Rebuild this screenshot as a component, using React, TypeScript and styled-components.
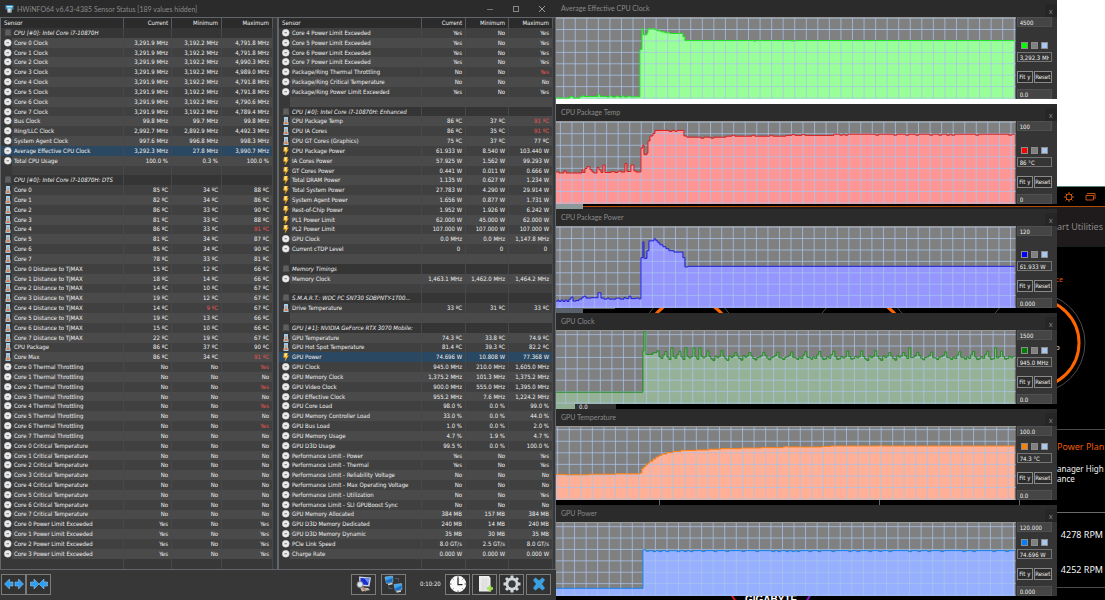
import React from "react";
import styled, { createGlobalStyle } from "styled-components";

const UI = `"DejaVu Sans Condensed", "Noto Sans", sans-serif`;
const TITLE = `Lato, "Noto Sans", sans-serif`;

const Global = createGlobalStyle`
  * { box-sizing: border-box; }
  html, body { margin: 0; height: 100%; background: #fff; overflow: hidden; }
  body { font-family: ${UI}; font-size: 6px; line-height: 8px; color: #f0f0f0; }
  button, input { font: inherit; color: inherit; margin: 0; padding: 0; border-radius: 0; }
`;

const Screen = styled.div`
  display: grid;
  grid-template-columns: minmax(0, 556fr) minmax(0, 549fr);
  grid-template-rows: minmax(0, 1fr);
  height: 100vh;
  overflow: hidden;
`;

/* ---------- sensor window ---------- */

const SensorWindow = styled.section`
  display: flex;
  flex-direction: column;
  min-height: 0;
  background: #373737;
`;

const TitleBar = styled.header`
  display: flex;
  align-items: center;
  flex: none;
  height: 17px;
  padding: 0 5px 0 5px;
  gap: 3px;
  background: #2b2b2b;
  color: #8a8a8a;
  font-family: ${TITLE};
  font-size: 7px;
`;

const TitleText = styled.h1`
  flex: 1;
  margin: 0;
  font: inherit;
`;

const CaptionButton = styled.button`
  display: flex;
  align-items: center;
  justify-content: center;
  width: 18px;
  height: 14px;
  margin-left: 5px;
  border: 0;
  background: none;
`;

const Panes = styled.div`
  flex: 1;
  min-height: 0;
  display: grid;
  grid-template: minmax(0, 1fr) / 1fr 1fr;
`;

const Pane = styled.div<{ $end: number }>`
  min-width: 0;
  min-height: 0;
  padding-right: ${(p) => p.$end}px;
  border: 1px solid #62656a;
`;

const Table = styled.table`
  width: 100%;
  height: 100%;
  table-layout: fixed;
  border-collapse: separate;
  border-spacing: 0;
`;

const Head = styled.th<{ $left?: boolean }>`
  padding: 0 3px;
  height: 10px;
  line-height: 8px;
  font-weight: 400;
  text-align: ${(p) => (p.$left ? "left" : "right")};
  background: #2b2b2b;
  border-right: 1px solid #55585c;
`;

const Row = styled.tr<{ $kind: "odd" | "even" | "group" | "selected" | "filler" }>`
  background: ${(p) =>
    ({ odd: "#4a4a4a", even: "#404040", group: "#353535", selected: "#2b4862", filler: "#383838" })[p.$kind]};
  font-style: ${(p) => (p.$kind === "group" ? "italic" : "normal")};
`;

const Cell = styled.td<{ $hot?: boolean }>`
  height: 8px;
  padding: 0 3px 0 0;
  line-height: 8px;
  text-align: right;
  white-space: nowrap;
  color: ${(p) => (p.$hot ? "#e85555" : "inherit")};
  border-right: 1px solid #434950;
`;

const NameCell = styled(Cell)`
  text-align: left;
  padding: 0 0 0 2px;
  overflow: hidden;
`;

const IconCell = styled.td<{ $plain: boolean }>`
  padding: 0 0 0 3px;
  height: 8px;
  line-height: 0;
  background: ${(p) => (p.$plain ? "#383838" : "transparent")};

  svg {
    display: block;
  }
`;

const Toolbar = styled.footer`
  flex: none;
  display: flex;
  align-items: center;
  height: 30px;
  gap: 2px;
  padding: 0 5px 2px 1px;
`;

const ColumnButtons = styled.div`
  display: flex;
  flex: 1;
`;

const ToolButton = styled.button<{ $gap?: number }>`
  display: flex;
  align-items: center;
  justify-content: center;
  width: 25px;
  height: 21px;
  margin-right: ${(p) => p.$gap ?? 0}px;
  border: 1px solid #7b7b7b;
  background: #333;
`;

const Elapsed = styled.time`
  width: 35px;
  padding-left: 12px;
`;

type IconKind = "c" | "t" | "p" | "g";

function RowIcon({ kind }: { kind: IconKind }) {
  if (kind === "c")
    return (
      <svg width="8" height="8" viewBox="0 0 16 16">
        <circle cx="7.500" cy="7.500" r="7" fill="#ececec" stroke="#c4c4c4" />
        <path d="M5 7.500h5" stroke="#777" strokeWidth="2" fill="none" />
      </svg>
    );
  if (kind === "t")
    return (
      <svg width="8" height="8" viewBox="0 0 16 16">
        <path d="M4 0h8v9l1 2v5H3v-5l1-2z" fill="#9fcbe6" />
        <path d="M7 4h2v6l2 1v3H5v-3l2-1z" fill="#ea7a3a" />
      </svg>
    );
  if (kind === "p")
    return (
      <svg width="8" height="8" viewBox="0 0 16 16">
        <path d="M4 0h8l-2 5h3L6 16l1-7H3z" fill="#ffc53d" stroke="#c98412" strokeWidth=".8" />
        <path d="M6 1h4L7.500 7H6z" fill="#fff0b0" />
      </svg>
    );
  return (
    <svg width="8" height="8" viewBox="0 0 16 16">
      <path d="M3 1h10l1 12H2z" fill="#626262" />
      <path d="M1 12h14v2H1z" fill="#4d4d4d" />
      <path d="M4 3v8M8 3v8M12 3v8" stroke="#555" />
    </svg>
  );
}

type Sensor = { icon: IconKind; name: string; v?: string[]; hot?: number[]; sel?: boolean } | null;

const s = (icon: IconKind, name: string, a: string, b: string, c: string, hot: number[] = [], sel = false): Sensor => ({
  icon,
  name,
  v: [a, b, c],
  hot,
  sel,
});
const g = (name: string): Sensor => ({ icon: "g", name });
const C = (n: number) => `${n} ºC`;
const range = [0, 1, 2, 3, 4, 5, 6, 7];

const coreMax = ["4,791.8", "4,791.8", "4,990.3", "4,989.0", "4,791.8", "4,791.8", "4,790.6", "4,789.4"];
const coreTemp = [
  [85, 34, 88],
  [82, 34, 86],
  [86, 33, 90],
  [81, 33, 88],
  [86, 33, 91],
  [81, 34, 87],
  [85, 34, 90],
  [78, 33, 81],
];
const tjmax = [
  [15, 12, 66],
  [18, 14, 66],
  [14, 10, 67],
  [19, 12, 67],
  [14, 9, 67],
  [19, 13, 66],
  [15, 10, 66],
  [22, 19, 67],
];

const leftRows: Sensor[] = [
  g("CPU [#0]: Intel Core i7-10870H"),
  ...range.map((i) => s("c", `Core ${i} Clock`, "3,291.9 MHz", "3,192.2 MHz", `${coreMax[i]} MHz`)),
  s("c", "Bus Clock", "99.8 MHz", "99.7 MHz", "99.8 MHz"),
  s("c", "Ring/LLC Clock", "2,992.7 MHz", "2,892.9 MHz", "4,492.3 MHz"),
  s("c", "System Agent Clock", "997.6 MHz", "996.8 MHz", "998.3 MHz"),
  s("c", "Average Effective CPU Clock", "3,292.3 MHz", "27.8 MHz", "3,990.7 MHz", [], true),
  s("c", "Total CPU Usage", "100.0 %", "0.3 %", "100.0 %"),
  null,
  g("CPU [#0]: Intel Core i7-10870H: DTS"),
  ...range.map((i) => s("t", `Core ${i}`, C(coreTemp[i][0]), C(coreTemp[i][1]), C(coreTemp[i][2]), i === 4 ? [2] : [])),
  ...range.map((i) =>
    s("t", `Core ${i} Distance to TjMAX`, C(tjmax[i][0]), C(tjmax[i][1]), C(tjmax[i][2]), i === 4 ? [1] : []),
  ),
  s("t", "CPU Package", C(86), C(37), C(90)),
  s("t", "Core Max", C(86), C(34), C(91), [2]),
  ...range.map((i) =>
    s("c", `Core ${i} Thermal Throttling`, "No", "No", i % 2 ? "No" : "Yes", i % 2 ? [] : [2]),
  ),
  ...range.map((i) => s("c", `Core ${i} Critical Temperature`, "No", "No", "No")),
  ...[0, 1, 2, 3].map((i) => s("c", `Core ${i} Power Limit Exceeded`, "Yes", "No", "Yes")),
];

const rightRows: Sensor[] = [
  ...[4, 5, 6, 7].map((i) => s("c", `Core ${i} Power Limit Exceeded`, "Yes", "No", "Yes")),
  s("c", "Package/Ring Thermal Throttling", "No", "No", "Yes", [2]),
  s("c", "Package/Ring Critical Temperature", "No", "No", "No"),
  s("c", "Package/Ring Power Limit Exceeded", "Yes", "No", "Yes"),
  null,
  g("CPU [#0]: Intel Core i7-10870H: Enhanced"),
  s("t", "CPU Package Temp", C(86), C(37), C(91), [2]),
  s("t", "CPU IA Cores", C(86), C(35), C(91), [2]),
  s("t", "CPU GT Cores (Graphics)", C(75), C(37), C(77)),
  s("p", "CPU Package Power", "61.933 W", "8.540 W", "103.440 W"),
  s("p", "IA Cores Power", "57.925 W", "1.562 W", "99.293 W"),
  s("p", "GT Cores Power", "0.441 W", "0.011 W", "0.666 W"),
  s("p", "Total DRAM Power", "1.135 W", "0.627 W", "1.234 W"),
  s("p", "Total System Power", "27.783 W", "4.290 W", "29.914 W"),
  s("p", "System Agent Power", "1.656 W", "0.877 W", "1.731 W"),
  s("p", "Rest-of-Chip Power", "1.952 W", "1.926 W", "6.242 W"),
  s("p", "PL1 Power Limit", "62.000 W", "45.000 W", "62.000 W"),
  s("p", "PL2 Power Limit", "107.000 W", "107.000 W", "107.000 W"),
  s("c", "GPU Clock", "0.0 MHz", "0.0 MHz", "1,147.8 MHz"),
  s("c", "Current cTDP Level", "0\u00a0", "0\u00a0", "0\u00a0"),
  null,
  g("Memory Timings"),
  s("c", "Memory Clock", "1,463.1 MHz", "1,462.0 MHz", "1,464.2 MHz"),
  null,
  g("S.M.A.R.T.: WDC PC SN730 SDBPNTY-1T00..."),
  s("t", "Drive Temperature", C(33), C(31), C(33)),
  null,
  g("GPU [#1]: NVIDIA GeForce RTX 3070 Mobile:"),
  s("t", "GPU Temperature", "74.3 ºC", "33.8 ºC", "74.9 ºC"),
  s("t", "GPU Hot Spot Temperature", "81.4 ºC", "39.3 ºC", "82.2 ºC"),
  s("p", "GPU Power", "74.696 W", "10.808 W", "77.368 W", [], true),
  s("c", "GPU Clock", "945.0 MHz", "210.0 MHz", "1,605.0 MHz"),
  s("c", "GPU Memory Clock", "1,375.2 MHz", "101.3 MHz", "1,375.2 MHz"),
  s("c", "GPU Video Clock", "900.0 MHz", "555.0 MHz", "1,395.0 MHz"),
  s("c", "GPU Effective Clock", "955.2 MHz", "7.6 MHz", "1,224.2 MHz"),
  s("c", "GPU Core Load", "98.0 %", "0.0 %", "99.0 %"),
  s("c", "GPU Memory Controller Load", "33.0 %", "0.0 %", "44.0 %"),
  s("c", "GPU Bus Load", "1.0 %", "0.0 %", "2.0 %"),
  s("c", "GPU Memory Usage", "4.7 %", "1.9 %", "4.7 %"),
  s("c", "GPU D3D Usage", "99.5 %", "0.0 %", "100.0 %"),
  s("c", "Performance Limit - Power", "Yes", "No", "Yes"),
  s("c", "Performance Limit - Thermal", "Yes", "No", "Yes"),
  s("c", "Performance Limit - Reliability Voltage", "No", "No", "No"),
  s("c", "Performance Limit - Max Operating Voltage", "No", "No", "No"),
  s("c", "Performance Limit - Utilization", "No", "No", "Yes"),
  s("c", "Performance Limit - SLI GPUBoost Sync", "No", "No", "No"),
  s("c", "GPU Memory Allocated", "384 MB", "157 MB", "384 MB"),
  s("c", "GPU D3D Memory Dedicated", "240 MB", "14 MB", "240 MB"),
  s("c", "GPU D3D Memory Dynamic", "35 MB", "30 MB", "35 MB"),
  s("c", "PCIe Link Speed", "8.0 GT/s", "2.5 GT/s", "8.0 GT/s"),
  s("c", "Charge Rate", "0.000 W", "0.000 W", "0.000 W"),
];

function SensorTable({ rows, widths }: { rows: Sensor[]; widths: number[] }) {
  return (
    <Table>
      <colgroup>
        <col style={{ width: 11 }} />
        <col />
        {widths.map((w, i) => (
          <col key={i} style={{ width: w }} />
        ))}
      </colgroup>
      <thead>
        <tr>
          <Head $left colSpan={2}>Sensor</Head>
          <Head>Current</Head>
          <Head>Minimum</Head>
          <Head>Maximum</Head>
        </tr>
      </thead>
      <tbody>
        {rows.map((r, i) => {
          const group = !!r && !r.v;
          const kind = r?.sel ? "selected" : group ? "group" : i % 2 ? "odd" : "even";
          return (
            <Row key={i} $kind={kind}>
              <IconCell $plain={kind !== "selected"}>{r && <RowIcon kind={r.icon} />}</IconCell>
              <NameCell>{r?.name}</NameCell>
              {[0, 1, 2].map((k) => (
                <Cell key={k} $hot={r?.hot?.includes(k)}>{r?.v?.[k]}</Cell>
              ))}
            </Row>
          );
        })}
        <Row $kind="filler">
          <IconCell $plain />
          <NameCell />
          <Cell />
          <Cell />
          <Cell />
        </Row>
      </tbody>
    </Table>
  );
}

/* ---------- graph windows ---------- */

type Pt = [number, number];

const flat = (from: number, to: number, y: number, amp: number, dips: number[]): Pt[] => {
  const out: Pt[] = [[from, y]];
  dips.filter((d) => d >= from && d < to).forEach((d) => out.push([d, y + amp], [d + 3, y]));
  out.push([to, y]);
  return out;
};

const cpuClock: Pt[] = [
  [0, 81], [14, 79.5], [17, 81], [24, 79.5], [27, 78.5], [28, 79.5], [42, 77.5], [44, 79.5], [51, 80], [53, 79],
  [56, 80], [60, 79.2], [63, 80], [66, 79], [68, 80], [72, 79], [74, 79.8], [84, 32], [86, 10.5], [87, 17],
  [91, 15], [92, 11], [99, 11.7], [101, 13], [105, 14], [109, 15], [114, 15.7], [127, 19], [129, 22.8], [197, 22.8],
  [198, 23.4], [200, 22.8], [235, 23.2], [240, 22.8], [459, 22.8],
];

const cpuTemp: Pt[] = [
  [0, 50], [3, 51], [8, 49], [10, 51], [26, 47.7], [27, 50.5], [29, 46.5], [31, 44.7], [34, 47.7], [36, 50], [38, 51],
  [41, 45.4], [43, 48], [45, 50.5], [47, 43], [49, 50.5], [55, 49.7], [59, 50.5], [62, 49], [65, 50], [69, 41.5],
  [71, 49.5], [75, 43], [78, 49], [80, 50], [85, 26], [87, 23], [88, 32.7], [91, 31], [92, 19], [94, 14], [97, 11.5],
  [99, 8.4], [113, 9.4], [116, 8.4], [119, 9.4], [121, 8.4], [128, 14], [131, 15.2],
  ...flat(139, 170, 15.2, 1, [145, 155]), ...flat(170, 230, 14.2, -1, [176, 196, 214]),
  ...flat(230, 278, 13.4, -1, [236, 246]), ...flat(278, 459, 12.2, 1, [284, 289, 320, 338, 350, 360, 374, 383, 391, 396, 420, 453]),
];

const cpuPower: Pt[] = [
  [0, 75], [2, 74], [3, 75.4], [5, 74], [7, 75.4], [9, 74], [11, 75.4], [13, 73], [15, 71], [17, 75], [20, 74.5],
  [23, 73], [26, 71], [28, 70], [30, 72], [35, 71.6], [42, 66.6], [45, 72], [48, 73], [51, 72], [53, 73], [60, 72],
  [64, 73], [68, 71.5], [70, 72.5], [73, 70], [75, 72.5], [80, 72], [83, 72.8], [85, 31], [87, 15], [88, 31.7],
  [91, 24], [93, 14], [98, 12], [100, 14], [102, 16], [104, 18], [107, 20], [110, 22], [113, 24], [118, 25.4],
  [127, 31], [129, 40.4], [132, 39.8], [459, 39.8],
];

const gpuClock: Pt[] = (() => {
  const out: Pt[] = [[0, 62], [87, 20.4], [88, 0], [90, 23.7], [97, 22], [101, 20], [103, 26]];
  const cycle = [28, 29, 26, 27, 25, 21, 26];
  const tall = [115, 129, 137, 143, 353, 439];
  for (let x = 105; x < 459; x += 2) {
    const wobble = ((x * 7) % 11) / 5 - 1;
    const spike = tall.some((t) => Math.abs(t - x) < 1);
    out.push([x, spike ? 17 : cycle[Math.floor(x / 2) % 7] + wobble]);
  }
  return out;
})();

const gpuTemp: Pt[] = [
  [0, 47.4], [10, 47.8], [33, 47.2], [60, 46.8], [84, 46], [86, 41.4], [88, 39.5], [90, 37.7], [92, 36], [94, 34.2],
  [97, 32], [100, 30], [103, 28.4], [106, 27], [111, 25.6], [117, 24.4], [125, 23.4], [140, 23], [153, 22.2],
  [165, 21.6], [185, 21], [205, 20.6], [227, 20], [229, 19.6], [232, 20], [266, 19.4], [275, 19], [324, 18.4],
  [326, 19], [459, 19],
];

const gpuPower: Pt[] = [
  [0, 66.2], [87, 27.2], [90, 28.6],
  ...flat(93, 459, 28, 1, [97, 103, 110, 121, 128, 134, 146, 158, 170, 186, 200, 216, 222, 230, 236, 241, 253, 262, 276, 293, 301, 313, 323, 333, 353, 362, 372, 385, 407, 417, 437, 450]),
];

const Window = styled.section<{ $grow: number }>`
  flex: ${(p) => p.$grow} 1 0;
  min-height: 0;
  display: flex;
  flex-direction: column;
  background: #353535;
`;

const GraphTitle = styled.header`
  flex: none;
  display: flex;
  align-items: stretch;
  justify-content: space-between;
  height: 17px;
  padding-left: 5px;
  background: #2b2b2b;
  color: #8a8a8a;
  font-family: ${TITLE};
  font-size: 7px;
`;

const GraphName = styled.h2`
  margin: 0;
  font: inherit;
  line-height: 17px;
`;

const CloseBox = styled.button`
  width: 12px;
  margin-top: 4px;
  border: 0;
  background: #262626;
  color: #8c8c8c;
  line-height: 10px;
`;

const GraphBody = styled.div`
  flex: 1;
  min-height: 0;
  display: flex;
`;

const Plot = styled.div`
  flex: 1;
  min-width: 0;
  line-height: 0;
  border-top: 1px solid #9a9a9a;

  svg {
    width: 100%;
    height: 100%;
  }
`;

const Side = styled.div`
  flex: none;
  display: flex;
  flex-direction: column;
  width: 41px;
  padding: 0 5px 0 1px;
`;

const Field = styled.input<{ $framed?: boolean }>`
  display: block;
  width: 100%;
  height: 10px;
  padding: 0 2px;
  border: 1px solid ${(p) => (p.$framed ? "#757575" : "#505050")};
  background: ${(p) => (p.$framed ? "#353535" : "#454545")};
  color: #f0f0f0;
`;

const Swatches = styled.div`
  display: flex;
  gap: 3px;
  margin: auto 0 3px 4px;
`;

const Swatch = styled.button<{ $color: string }>`
  width: 7px;
  height: 7px;
  border: 1px solid #8c8c8c;
  background: ${(p) => p.$color};
`;

const Actions = styled.div`
  display: flex;
  gap: 1px;
  margin: 9px 0 6px;
`;

const Action = styled.button<{ $wide?: boolean }>`
  flex: ${(p) => (p.$wide ? 18 : 16)} 1 0;
  min-width: 0;
  height: 12px;
  border: 1px solid #8a8a8a;
  background: #2b2b2b;
  color: #f0f0f0;
`;

const Gap = styled.div`
  flex: none;
  display: flex;
  height: 5px;
  overflow: hidden;
`;

const Peek = styled.span<{ $w: number; $color: string; $line?: boolean }>`
  width: ${(p) => p.$w}px;
  height: ${(p) => (p.$line ? 1 : 5)}px;
  line-height: 5px;
  padding-left: 4px;
  background: ${(p) => p.$color};
`;

function Graph({ h, first, data, fill, line }: { h: number; first: number; data: Pt[]; fill: string; line: string }) {
  let d = `M0 ${data[0][1]}`;
  data.forEach(([x, y]) => (d += `H${x}V${y}`));
  d += "H459";
  const vs: number[] = [];
  for (let x = first; x < 460; x += 11.56) vs.push(x);
  const hs: number[] = [];
  for (let y = h - 1; y > 0; y -= 11.55) hs.push(y);
  return (
    <svg viewBox={`0 0 460 ${h}`} preserveAspectRatio="none">
      <rect width="460" height={h} fill="#808080" />
      <path d={`${d}V${h}H0Z`} fill={fill} />
      <path
        d={vs.map((x) => `M${x} 0V${h}`).join("") + hs.map((y) => `M0 ${y}H460`).join("")}
        stroke="#a8c4ea"
        strokeOpacity=".75"
        strokeWidth="1"
      />
      <path d={d} fill="none" stroke={line} strokeWidth="1" />
    </svg>
  );
}

const graphs = [
  { title: "Average Effective CPU Clock", grow: 99, h: 82, first: 7.7, max: "4500", cur: "3,292.3 MHz", min: "0.0", swatch: "#00ff00", fill: "#99ff99", line: "#1ee61e", data: cpuClock },
  { title: "CPU Package Temp", grow: 100, h: 82, first: 4.4, max: "100", cur: "86 °C", min: "0", swatch: "#ff0000", fill: "#ff9696", line: "#dc1e1e", data: cpuTemp },
  { title: "CPU Package Power", grow: 99, h: 82, first: 4, max: "120", cur: "61.933 W", min: "0.000", swatch: "#0000ff", fill: "#9696ff", line: "#1e1edc", data: cpuPower },
  { title: "GPU Clock", grow: 91, h: 74, first: 9.7, max: "1500", cur: "945.0 MHz", min: "0.0", swatch: "#008000", fill: "#96b296", line: "#1e8c1e", data: gpuClock },
  { title: "GPU Temperature", grow: 91, h: 73, first: 1.7, max: "100.0", cur: "74.3 °C", min: "0.0", swatch: "#ff8000", fill: "#ffb096", line: "#ff8214", data: gpuTemp },
  { title: "GPU Power", grow: 91, h: 74, first: 7, max: "120.000", cur: "74.696 W", min: "0.000", swatch: "#0080ff", fill: "#96b0ff", line: "#1482f0", data: gpuPower },
];

const peeks: React.ReactNode[] = [
  null,
  <Peek key="a" $w={27} $color="#8d9a9c" />,
  <React.Fragment key="b">
    <Peek $w={27} $color="#59616a" />
    <Peek $w={32} $color="#5e5e5e" $line />
  </React.Fragment>,
  <React.Fragment key="c">
    <Peek $w={19} $color="#8fae93" />
    <Peek $w={41} $color="#333">0.0</Peek>
  </React.Fragment>,
  null,
  null,
];

/* ---------- desktop behind the graph windows ---------- */

const Desktop = styled.div`
  display: grid;
  grid-template: minmax(0, 1fr) / minmax(0, 1fr);
  min-width: 0;

  > * {
    grid-area: 1 / 1;
  }
`;

const Graphs = styled.main`
  display: flex;
  flex-direction: column;
  width: 91.2%;
  min-height: 0;
  padding-bottom: 4px;
`;

const Backdrop = styled.div`
  display: flex;
  flex-direction: column;
  min-height: 0;
  overflow: hidden;
  padding-top: 186px;
  background: #fff;
  font-family: "Noto Sans", sans-serif;
`;

const ControlApp = styled.div`
  flex: 1;
  min-height: 0;
  display: flex;
  flex-direction: column;
  background: #000;
  border-top: 1px solid #5c8578;
`;

const AppHeader = styled.div`
  display: flex;
  flex: none;
  align-items: center;
  justify-content: flex-end;
  gap: 10px;
  height: 20px;
  padding-right: 9px;
  border-bottom: 1px solid #b44a08;
`;

const AppTabs = styled.nav`
  display: flex;
  flex: none;
  align-items: center;
  justify-content: flex-end;
  height: 40px;
  padding-right: 2px;
  background: #1f1b1c;
  border-bottom: 1px solid #14201c;
`;

const TabLink = styled.a`
  color: #8a8686;
  font-size: 9px;
  text-decoration: none;
`;

const Gauges = styled.div`
  display: grid;
  flex: none;
  height: 182px;

  > * {
    grid-area: 1 / 1;
  }
`;

const Edge = styled.div`
  justify-self: end;
  width: 9%;
  overflow: hidden;
  padding-top: 28px;
  white-space: nowrap;
`;

const GaugeLabel = styled.p`
  margin: 0;
  color: #e05a0a;
  font-size: 7px;
  line-height: 10px;
`;

const GaugeUnit = styled.p`
  margin: 58px 0 0;
  font-size: 7px;
  line-height: 10px;
`;

const PlanRow = styled.div`
  display: grid;
  flex: none;
  grid-template-columns: 104fr 220fr 140fr 37fr 48fr;
  height: 83px;
  border-top: 1px solid #4a4a4a;
`;

const Divider = styled.span`
  border-right: 1px solid #6a6a6a;
`;

const Plan = styled.div`
  padding-top: 9px;
  white-space: nowrap;
`;

const PlanTitle = styled.h3`
  margin: 0 0 9px;
  color: #e85c0a;
  font-size: 9px;
  line-height: 16px;
  font-weight: 400;
`;

const PlanText = styled.p`
  margin: 0;
  color: #f2f2f2;
  font-size: 8px;
  line-height: 10px;
`;

const FanRow = styled.div`
  display: flex;
  flex: none;
  flex-direction: column;
  align-items: flex-end;
  gap: 19px;
  height: 76px;
  padding: 14px 2px 0;
  border-top: 1px solid #6a6a6a;
  border-bottom: 1px solid #4a4a4a;
  color: #f5f5f5;
  font-size: 9px;
  line-height: 16px;
`;

const BrandRow = styled.div`
  display: flex;
  flex: none;
  align-items: flex-start;
  padding: 6px 0 0 173px;
  gap: 8px;
  color: #fff;
  font-family: "Liberation Sans", sans-serif;
  font-size: 10px;
  line-height: 12px;
  font-weight: 700;
`;

export default function App() {
  return (
    <>
      <Global />
      <Screen>
        <SensorWindow>
          <TitleBar>
            <svg width="9" height="9" viewBox="0 0 18 18">
              <path d="M1 2h16v9H1z" fill="#2f86b8" />
              <path d="M3 4h12v3H3z" fill="#bfe6f5" />
              <path d="M5 9h8v8H5z" fill="#e4eef2" />
              <path d="M8 11v6M11 11v6" stroke="#4b8199" />
            </svg>
            <TitleText>HWiNFO64 v6.43-4385 Sensor Status [189 values hidden]</TitleText>
            <CaptionButton aria-label="Minimize">
              <svg width="6" height="6"><path d="M0 3.500H6" stroke="#777" /></svg>
            </CaptionButton>
            <CaptionButton aria-label="Maximize">
              <svg width="6" height="6"><rect x=".5" y=".5" width="5" height="5" fill="none" stroke="#888" /></svg>
            </CaptionButton>
            <CaptionButton aria-label="Close">
              <svg width="6" height="6"><path d="M0 0L6 6M6 0L0 6" stroke="#999" /></svg>
            </CaptionButton>
          </TitleBar>
          <Panes>
            <Pane $end={4}>
              <SensorTable rows={leftRows} widths={[48, 50, 51]} />
            </Pane>
            <Pane $end={2}>
              <SensorTable rows={rightRows} widths={[44, 43, 44]} />
            </Pane>
          </Panes>
          <Toolbar>
            <ColumnButtons>
              <ToolButton aria-label="Expand columns">
                <svg width="20" height="12" viewBox="0 0 40 24" fill="#2f9df0" stroke="#9fd0f5" strokeWidth="1">
                  <path d="M1 12L11 2v6h7v8h-7v6z" />
                  <path d="M39 12L29 2v6h-7v8h7v6z" />
                </svg>
              </ToolButton>
              <ToolButton aria-label="Shrink columns">
                <svg width="20" height="12" viewBox="0 0 40 24" fill="#2f9df0" stroke="#9fd0f5" strokeWidth="1">
                  <path d="M20 12L10 2v6H3v8h7v6z" />
                  <path d="M20 12L30 2v6h7v8h-7v6z" />
                </svg>
              </ToolButton>
            </ColumnButtons>
            <ToolButton aria-label="Remote monitor" $gap={3}>
              <svg width="18" height="18" viewBox="0 0 36 36">
                <path d="M8 3l24 2-3 18-20-1z" fill="#c9d2e8" />
                <path d="M11 6l18 1-3 13-15-1z" fill="#1b2fd0" />
                <path d="M18 6l11 1-2 10z" fill="#6f8cf5" />
                <path d="M10 25l16 1 4 4-16 3z" fill="#bcbcbc" />
                <circle cx="10" cy="19" r="6" fill="#d7e6f5" stroke="#8a8a8a" strokeWidth="2" />
                <path d="M14 24l8 8" stroke="#b98a6a" strokeWidth="4" />
              </svg>
            </ToolButton>
            <ToolButton aria-label="Network">
              <svg width="19" height="18" viewBox="0 0 38 36">
                <path d="M2 4l15-2 1 12-13 3z" fill="#3aa4f0" stroke="#a9cfe8" strokeWidth="1" />
                <path d="M20 19l15-2 1 12-13 3z" fill="#3aa4f0" stroke="#a9cfe8" strokeWidth="1" />
                <path d="M4 11l13-5v8L5 16zM22 27l13-6v7l-12 4z" fill="#1c6fc4" />
                <path d="M8 19l9-2M25 34l9-2" stroke="#d5d5d5" strokeWidth="3" />
                <path d="M22 7h7v6M10 22v5h7" stroke="#5d6f7b" strokeWidth="1.500" fill="none" />
              </svg>
            </ToolButton>
            <Elapsed>0:10:20</Elapsed>
            <ToolButton aria-label="Clock">
              <svg width="18" height="18" viewBox="0 0 36 36">
                <circle cx="18" cy="18" r="16.500" fill="#fafafa" />
                <path d="M18 5v14h9" stroke="#222" strokeWidth="2.500" fill="none" />
                <path d="M18 2v3M18 31v3M2 18h3M31 18h3M7 7l2 2M27 27l2 2M7 29l2-2M27 9l2-2" stroke="#555" strokeWidth="2" />
              </svg>
            </ToolButton>
            <ToolButton aria-label="Log file">
              <svg width="18" height="18" viewBox="0 0 36 36">
                <path d="M6 2h20l3 4v27H6z" fill="#efefef" />
                <path d="M9 8h17M9 12h17M9 16h17M9 20h17M9 24h14M9 28h12M14 5v26M20 5v26" stroke="#c9c9c9" />
                <path d="M28 21v12M22 27h12" stroke="#a5dc5a" strokeWidth="5" />
              </svg>
            </ToolButton>
            <ToolButton aria-label="Settings">
              <svg width="18" height="18" viewBox="0 0 36 36">
                <circle cx="18" cy="18" r="10" fill="none" stroke="#d2d8da" strokeWidth="6" />
                <path d="M18 1v6M18 29v6M1 18h6M29 18h6M6 6l4 4M26 26l4 4M6 30l4-4M26 10l4-4" stroke="#d2d8da" strokeWidth="6" />
                <circle cx="18" cy="18" r="7" fill="#3b3b3b" />
              </svg>
            </ToolButton>
            <ToolButton aria-label="Exit">
              <svg width="14" height="14" viewBox="0 0 28 28">
                <path d="M2 6l5-5 7 6 7-6 5 5-6 8 6 8-5 5-7-6-7 6-5-5 6-8z" fill="#3aa0e0" />
              </svg>
            </ToolButton>
          </Toolbar>
        </SensorWindow>

        <Desktop>
          <Backdrop>
            <ControlApp>
              <AppHeader>
                <svg width="12" height="12" viewBox="0 0 24 24" fill="none" stroke="#d4560c" strokeWidth="2">
                  <circle cx="12" cy="12" r="6" />
                  <path d="M12 2v4M12 18v4M2 12h4M18 12h4M5 5l3 3M16 16l3 3M5 19l3-3M16 8l3-3" />
                </svg>
                <svg width="11" height="10" viewBox="0 0 22 20" fill="none" stroke="#c8500c" strokeWidth="2">
                  <path d="M2 7h15v9H2zM4 3h16v11" />
                </svg>
              </AppHeader>
              <AppTabs>
                <TabLink href="#utilities">art Utilities</TabLink>
              </AppTabs>
              <Gauges>
                <svg width="100%" height="182" viewBox="0 0 549 182" fill="none">
                  <circle cx="133" cy="96" r="50" stroke="#4c4c4c" />
                  <circle cx="306" cy="96" r="50" stroke="#4c4c4c" />
                  <circle cx="479" cy="96" r="50" stroke="#4c4c4c" />
                  <circle cx="133" cy="96" r="44" stroke="#ff6600" strokeWidth="3" />
                  <path d="M306 52a44 44 0 0 1 0 88" stroke="#ff6600" strokeWidth="3" />
                  <path d="M479 52a44 44 0 0 1 0 88" stroke="#ff6600" strokeWidth="3" />
                </svg>
                <Edge>
                  <GaugeLabel>ce</GaugeLabel>
                  <GaugeUnit>o</GaugeUnit>
                </Edge>
              </Gauges>
              <PlanRow>
                <Divider />
                <Divider />
                <Divider />
                <span />
                <Plan>
                  <PlanTitle>Power Plan</PlanTitle>
                  <PlanText>anager High</PlanText>
                  <PlanText>ance</PlanText>
                </Plan>
              </PlanRow>
              <FanRow>
                <span>4278 RPM</span>
                <span>4252 RPM</span>
              </FanRow>
              <BrandRow>
                <svg width="8" height="10" viewBox="0 0 8 10"><path d="M2 0l5 8" stroke="#d01818" strokeWidth="2" /></svg>
                <span>GIGABYTE</span>
                <svg width="8" height="10" viewBox="0 0 8 10"><path d="M6 0L1 8" stroke="#8a18c0" strokeWidth="2" /></svg>
              </BrandRow>
            </ControlApp>
          </Backdrop>

          <Graphs>
            {graphs.map((w, i) => (
              <React.Fragment key={w.title}>
                <Window $grow={w.grow}>
                  <GraphTitle>
                    <GraphName>{w.title}</GraphName>
                    <CloseBox aria-label={`Close ${w.title}`}>x</CloseBox>
                  </GraphTitle>
                  <GraphBody>
                    <Plot>
                      <Graph h={w.h} first={w.first} data={w.data} fill={w.fill} line={w.line} />
                    </Plot>
                    <Side>
                      <Field aria-label="Maximum" defaultValue={w.max} />
                      <Swatches>
                        <Swatch $color={w.swatch} aria-label="Graph colour" />
                        <Swatch $color="#808080" aria-label="Background colour" />
                        <Swatch $color="#a8c8f0" aria-label="Grid colour" />
                      </Swatches>
                      <Field $framed aria-label="Current value" readOnly defaultValue={w.cur} />
                      <Actions>
                        <Action>Fit y</Action>
                        <Action $wide>Reset</Action>
                      </Actions>
                      <Field aria-label="Minimum" defaultValue={w.min} />
                    </Side>
                  </GraphBody>
                </Window>
                {i < graphs.length - 1 && <Gap>{peeks[i]}</Gap>}
              </React.Fragment>
            ))}
          </Graphs>
        </Desktop>
      </Screen>
    </>
  );
}
